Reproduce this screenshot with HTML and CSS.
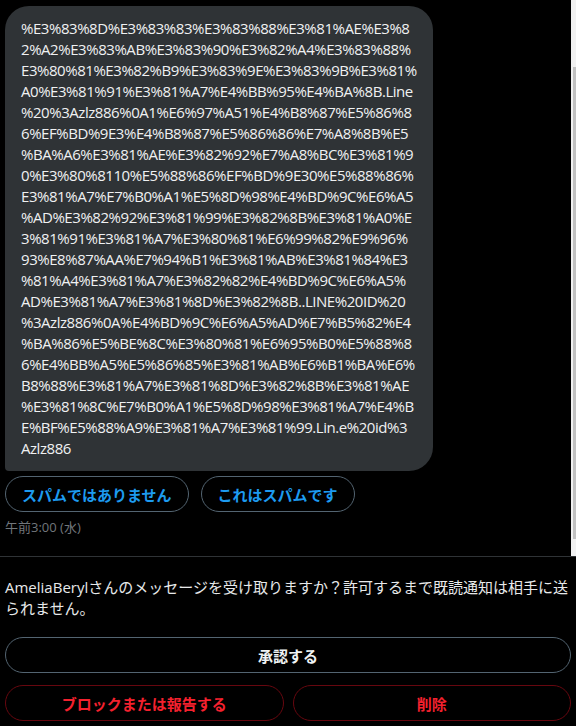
FILE: index.html
```html
<!DOCTYPE html>
<html lang="ja">
<head>
<meta charset="utf-8">
<link rel="stylesheet" href="styles.css">
</head>
<body>
<div class="top">
  <div class="thread">
    <div class="bubble">%E3%83%8D%E3%83%83%E3%83%88%E3%81%AE%E3%8<br>2%A2%E3%83%AB%E3%83%90%E3%82%A4%E3%83%88%<br>E3%80%81%E3%82%B9%E3%83%9E%E3%83%9B%E3%81%<br>A0%E3%81%91%E3%81%A7%E4%BB%95%E4%BA%8B.Line<br>%20%3Azlz886%0A1%E6%97%A51%E4%B8%87%E5%86%8<br>6%EF%BD%9E3%E4%B8%87%E5%86%86%E7%A8%8B%E5<br>%BA%A6%E3%81%AE%E3%82%92%E7%A8%BC%E3%81%9<br>0%E3%80%8110%E5%88%86%EF%BD%9E30%E5%88%86%<br>E3%81%A7%E7%B0%A1%E5%8D%98%E4%BD%9C%E6%A5<br>%AD%E3%82%92%E3%81%99%E3%82%8B%E3%81%A0%E<br>3%81%91%E3%81%A7%E3%80%81%E6%99%82%E9%96%<br>93%E8%87%AA%E7%94%B1%E3%81%AB%E3%81%84%E3<br>%81%A4%E3%81%A7%E3%82%82%E4%BD%9C%E6%A5%<br>AD%E3%81%A7%E3%81%8D%E3%82%8B..LINE%20ID%20<br>%3Azlz886%0A%E4%BD%9C%E6%A5%AD%E7%B5%82%E4<br>%BA%86%E5%BE%8C%E3%80%81%E6%95%B0%E5%88%8<br>6%E4%BB%A5%E5%86%85%E3%81%AB%E6%B1%BA%E6%<br>B8%88%E3%81%A7%E3%81%8D%E3%82%8B%E3%81%AE<br>%E3%81%8C%E7%B0%A1%E5%8D%98%E3%81%A7%E4%B<br>E%BF%E5%88%A9%E3%81%A7%E3%81%99.Lin.e%20id%3<br>Azlz886</div>
    <div class="spam-actions">
      <button class="pill pill-blue">スパムではありません</button>
      <button class="pill pill-blue">これはスパムです</button>
    </div>
    <div class="time">午前3:00 (水)</div>
  </div>
  <div class="scrollbar"><div class="thumb"></div></div>
</div>
<div class="request">
  <p class="request-text">AmeliaBerylさんのメッセージを受け取りますか？許可するまで既読通知は相手に送られません。</p>
  <button class="wide wide-accept">承認する</button>
  <div class="row">
    <button class="wide wide-red">ブロックまたは報告する</button>
    <button class="wide wide-red">削除</button>
  </div>
</div>
</body>
</html>
```
FILE: styles.css
```css
* { box-sizing: border-box; }
html, body {
  margin: 0;
  background: #000;
  height: 726px;
  overflow: hidden;
}
body {
  font-family: "Open Sans", "Noto Sans CJK JP", sans-serif;
  color: #e7e9ea;
}
.top {
  display: flex;
  height: 557px;
  border-bottom: 1px solid #2f3336;
}
.thread {
  flex: 1;
  padding: 6px 0 0 5px;
}
.bubble {
  width: 428px;
  background: #2f3336;
  border-radius: 24px 24px 24px 4px;
  padding: 12px 16px;
  font-size: 15px;
  line-height: 21px;
  letter-spacing: -0.45px;
  white-space: nowrap;
  color: #eff1f2;
}
.spam-actions {
  display: flex;
  gap: 12px;
  margin-top: 5px;
}
.pill {
  height: 36px;
  padding: 0 16px;
  border-radius: 18px;
  background: transparent;
  border: 1px solid #536471;
  font-family: "Noto Sans CJK JP", sans-serif;
  font-weight: 700;
  font-size: 15px;
}
.pill-blue { color: #1d9bf0; }
.time {
  margin-top: 7px;
  font-size: 13px;
  line-height: 16px;
  color: #71767b;
}
.scrollbar {
  width: 5px;
  background: #f1f1f1;
  padding-top: 67px;
  display: flex;
  flex-direction: column;
  align-items: flex-end;
}
.thumb {
  width: 3px;
  height: 472px;
  background: #c1c1c1;
}
.request {
  padding: 20px 5px 0;
}
.request-text {
  margin: 0;
  font-size: 15px;
  line-height: 21px;
  color: #e7e9ea;
}
.wide {
  display: block;
  width: 100%;
  height: 36px;
  border-radius: 18px;
  background: transparent;
  font-family: "Noto Sans CJK JP", sans-serif;
  font-weight: 700;
  font-size: 15px;
}
.wide-accept {
  margin-top: 18px;
  border: 1px solid #536471;
  color: #eff3f4;
}
.row {
  display: flex;
  gap: 9px;
  margin-top: 12px;
}
.wide-red {
  flex: 1;
  border: 1px solid #67070f;
  color: #f4212e;
}
```
